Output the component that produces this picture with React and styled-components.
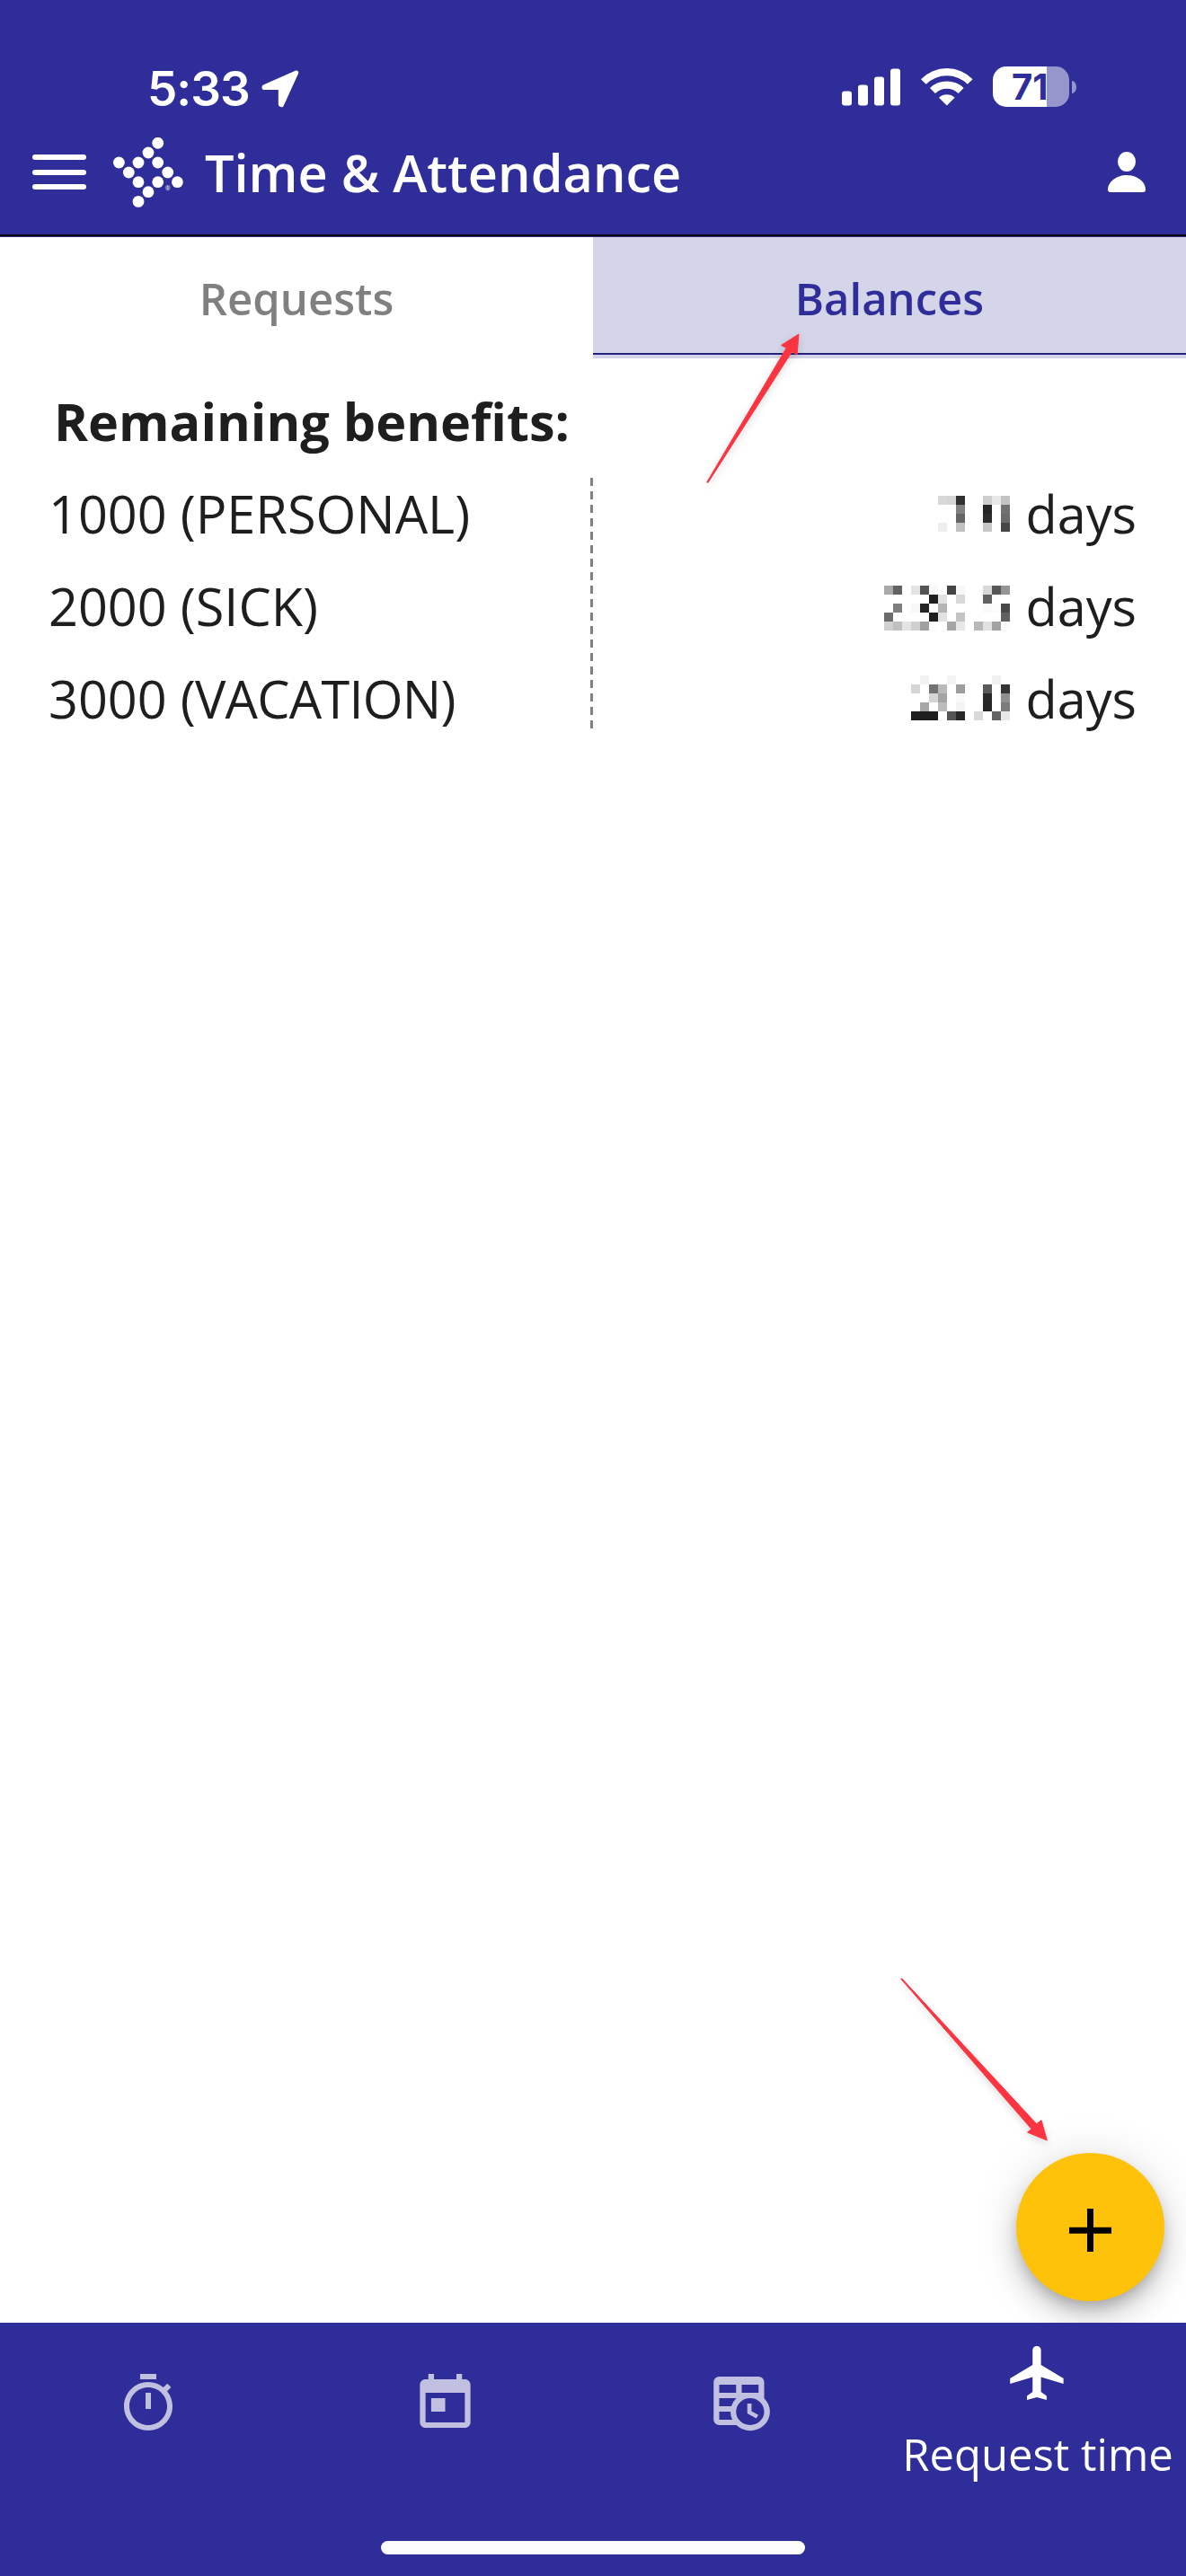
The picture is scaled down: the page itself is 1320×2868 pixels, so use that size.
import styled, { createGlobalStyle } from 'styled-components';

const benefits = [
    {
        code: '1000',
        name: '(PERSONAL)',
        mask: [
            [, , , , , , 'd8', 'd6', '30', , , 'ce', 'e7', 'c3'],
            [, , , , , , , , '80', , , '25', , '72'],
            [, , , , , , , , '64', , , '2c', , '6b'],
            [, , , , , , 'ee', , 'c0', , , 'c7', , '46'],
        ],
    },
    {
        code: '2000',
        name: '(SICK)',
        mask: [
            ['a9', '62', , 'e4', '54', 'f8', , '44', 'f7', , , 'd8', '58', '95'],
            [, , , , , '1e', 'e1', , 'd8', , , '62'],
            [, '7e', , 'f8', '26', 'fc', 'b4', , , , , 'f9', 'fc', '48'],
            ['6b', , , , , '1e', 'e1', , 'c4', , , , , '60'],
            ['d0', 'c0', 'e4', 'cf', 'a0', 'fc', , 'a5', 'e7', , 'b8', 'e2', 'a2', 'fb'],
        ],
    },
    {
        code: '3000',
        name: '(VACATION)',
        tight: true,
        mask: [
            [, , , , 'f2', , , 'f3', , , , , 'f1'],
            [, , , 'd6', , '72', 'ba', , '9d', , , '5a', , '35'],
            [, , , , , 'd5', 'a4', , 'fa', , , '28', , '8f'],
            [, , , , 'a7', , 'bc', , 'f4', , , '26', , '7b'],
            [, , , '1e', '1e', '1e', , '55', '28', , 'd9', , '64', 'e7'],
        ],
    },
];

const logoDots = [
    [49.7, 6.3], [39, 17], [28, 28], [49.7, 28], [6.4, 28], [17.3, 39],
    [60.7, 39], [28, 49.7], [49.7, 49.7], [71.4, 49.7], [39, 60.7], [28, 71.4],
];

const navItems = [
    {
        id: 'timer',
        width: 72,
        path: 'M15 1H9v2h6V1zm-4 13h2V8h-2v6zm8.03-6.61l1.42-1.42c-.43-.51-.9-.99-1.41-1.41l-1.42 1.42C16.07 4.74 14.12 4 12 4c-4.97 0-9 4.03-9 9s4.02 9 9 9 9-4.03 9-9c0-2.12-.74-4.07-1.97-5.61zM12 20c-3.87 0-7-3.13-7-7s3.13-7 7-7 7 3.13 7 7-3.13 7-7 7z',
    },
    {
        id: 'calendar',
        width: 75,
        path: 'M19 3h-1V1h-2v2H8V1H6v2H5c-1.11 0-2 .9-2 2v14c0 1.1.89 2 2 2h14c1.1 0 2-.9 2-2V5c0-1.1-.9-2-2-2zm0 16H5V8h14v11zM7 10h5v5H7z',
    },
    {
        id: 'timesheet',
        width: 75,
        path: 'M4 2h14a2 2 0 0 1 2 2v6.1A7 7 0 1 1 10.1 20H4a2 2 0 0 1-2-2V4a2 2 0 0 1 2-2zM4 5v3h6V5zM12 5v3h6V5zM4 10v3h4.29A7 7 0 0 1 10.1 10zM4 15v3h4.67A7 7 0 0 1 8 15zM15 10a5 5 0 1 0 0 10a5 5 0 1 0 0-10zM14 12V15.69L17.19 17.53L17.94 16.23L15.5 14.82V12z',
    },
    {
        id: 'request',
        width: 75,
        label: 'Request time',
        path: 'M21 16v-2l-8-5V3.5a1.5 1.5 0 0 0-3 0V9l-8 5v2l8-2.5V19l-2 1.5V22l3.5-1 3.5 1v-1.5L13 19v-5.5z',
    },
];

const Mask = ({ rows }) => (
    <MaskSvg width="140" height={rows.length * 10} shapeRendering="crispEdges">
        {rows.map((row, y) => row.map((c, x) => (
            <rect key={`${x}-${y}`} x={x * 10} y={y * 10} width="10" height="10" fill={`#${c}${c}${c}`} />
        )))}
    </MaskSvg>
)

const StatusBar = () => (
    <Status>
        <Clock>5:33</Clock>
        <svg width="42" height="42" viewBox="0 0 42 42" fill="#fff" stroke="#fff" strokeWidth="5" strokeLinejoin="round">
            <path d="M38.7 3L3 18.7V19.5H21.3V38.2L22.4 38.7Z" />
        </svg>
        <StatusRight>
            <svg width="66" height="42" fill="#fff">
                <rect x="0" y="25.5" width="11" height="16" rx="3" />
                <rect x="18" y="18.5" width="11" height="23" rx="3" />
                <rect x="36" y="9.5" width="11" height="32" rx="3" />
                <rect x="54" y="0.5" width="11" height="41" rx="3" />
            </svg>
            <svg width="58" height="43" fill="#fff">
                <path d="M0 13.2A40 40 0 0 1 57.6 13.2L51.9 18.8A33 33 0 0 0 5.7 18.8Z" />
                <path d="M10 23A27 27 0 0 1 47.6 23L41.6 29A18.5 18.5 0 0 0 16 29Z" />
                <path d="M20 33.8A13 13 0 0 1 37.6 33.8L28.8 42.6Z" />
            </svg>
            <Battery>
                <BatteryBody>71</BatteryBody>
                <BatteryTip />
            </Battery>
        </StatusRight>
    </Status>
)

const Arrow = ({ points }) => (
    <polygon points={points} fill="#fb3441" stroke="#fb3441" strokeWidth="1" strokeLinejoin="round" />
)

const App = () => {
    return (
        <>
            <GlobalStyle />
            <Screen>
                <Header>
                    <StatusBar />
                    <AppBar>
                        <Menu><i /><i /><i /></Menu>
                        <Logo viewBox="0 0 78 78">
                            {logoDots.map(([x, y]) => <circle key={`${x}-${y}`} cx={x} cy={y} r="6.4" />)}
                            <text x="57.7" y="59" fontSize="7">®</text>
                        </Logo>
                        <Title>Time &amp; Attendance</Title>
                        <svg width="42" height="45" fill="#fff">
                            <ellipse cx="21" cy="11" rx="10" ry="11" />
                            <path d="M0 42C0 34 9 26 21 26S42 34 42 42Q42 45 39 45H3Q0 45 0 42Z" />
                        </svg>
                    </AppBar>
                </Header>
                <Tabs>
                    <Tab>Requests</Tab>
                    <Tab $active>Balances</Tab>
                </Tabs>
                <Main>
                    <Heading>Remaining benefits:</Heading>
                    <Benefits>
                        <Column>
                            {benefits.map(b => (
                                <Row key={b.code}>
                                    <span>{b.code}</span>
                                    <Name $tight={b.tight}>{b.name}</Name>
                                </Row>
                            ))}
                        </Column>
                        <Divider />
                        <Column>
                            {benefits.map(b => (
                                <Row key={b.code} $end>
                                    <Mask rows={b.mask} />
                                    days
                                </Row>
                            ))}
                        </Column>
                    </Benefits>
                    <AddButton>
                        <svg width="47" height="48">
                            <path d="M20 0h7v20.7h20v7H27V48h-7V27.7H0v-7h20z" />
                        </svg>
                    </AddButton>
                </Main>
                <Nav>
                    {navItems.map(item => (
                        <NavItem key={item.id} $active={!!item.label}>
                            <svg width={item.width} height="72" viewBox="0 0 24 24" preserveAspectRatio="none">
                                <path d={item.path} fill="currentColor" fillRule="evenodd" />
                            </svg>
                            {item.label && <NavLabel>{item.label}</NavLabel>}
                        </NavItem>
                    ))}
                </Nav>
                <HomeBar><i /></HomeBar>
                <Marks viewBox="0 0 1320 2868">
                    <Arrow points="786.8,536.8 875.3,387.3 869.5,384.4 889,372 887,395 881.5,391.5 788,537.4" />
                    <Arrow points="1002.8,2203.3 1148,2370.3 1143.6,2374 1165.3,2383 1159,2360.6 1153.7,2364.7 1003.8,2202.8" />
                </Marks>
            </Screen>
        </>
    )
}

const GlobalStyle = createGlobalStyle`
    body {
        margin: 0;
        background-color: #fff;
        font-family: "Open Sans", "Noto Sans", sans-serif;
    }
    svg {
        display: block;
        flex-shrink: 0;
    }
`;

const Screen = styled.div`
    position: relative;
    display: flex;
    flex-direction: column;
    width: 1320px;
    height: 2868px;
    overflow: hidden;
    color: #1e1e1e;
`;
const Header = styled.header`
    box-sizing: border-box;
    height: 264px;
    background-color: #2f2d99;
    border-bottom: 1px solid #2f2d80;
    box-shadow: inset 0 -2px 0 #0a0512;
    color: #fff;
`;
const Status = styled.div`
    display: flex;
    align-items: center;
    box-sizing: border-box;
    height: 142px;
    padding: 55px 122px 0 164px;
`;
const Clock = styled.span`
    width: 127px;
    font: 600 53px/60px Inter, sans-serif;
    letter-spacing: -1px;
`;
const StatusRight = styled.div`
    display: flex;
    align-items: center;
    gap: 22px;
    margin-left: auto;
    margin-bottom: 4px;
`;
const Battery = styled.div`
    display: flex;
    align-items: center;
    gap: 3px;
`;
const BatteryBody = styled.div`
    box-sizing: border-box;
    width: 85px;
    height: 45px;
    padding-left: 21px;
    border-radius: 15px;
    background: linear-gradient(to right, #fff 60px, #9796cc 60px);
    color: #2f2d99;
    font: 700 40px/45px Inter, sans-serif;
`;
const BatteryTip = styled.div`
    width: 5px;
    height: 14px;
    border-radius: 0 5px 5px 0 / 0 7px 7px 0;
    background-color: #9796cc;
`;
const AppBar = styled.div`
    display: flex;
    align-items: center;
    height: 99px;
    padding: 0 45px 0 36px;
`;
const Menu = styled.div`
    display: flex;
    flex-direction: column;
    gap: 10.5px;
    width: 60px;
    margin-right: 30px;
    i {
        height: 6px;
        border-radius: 3px;
        background-color: #fff;
    }
`;
const Logo = styled.svg`
    width: 78px;
    height: 78px;
    fill: #fff;
`;
const Title = styled.h1`
    flex: 1;
    margin: 0 0 0 24px;
    font-size: 57.6px;
    font-weight: 600;
    line-height: 78px;
`;
const Tabs = styled.div`
    display: grid;
    grid-template-columns: 1fr 1fr;
    height: 135px;
`;
const Tab = styled.div`
    box-sizing: border-box;
    padding-top: 34px;
    text-align: center;
    font-size: 49px;
    font-weight: 600;
    line-height: 68px;
    color: ${props => props.$active ? "#2f2d99" : "#808080"};
    background: ${props => props.$active
        ? "linear-gradient(#d5d5e9 129px, #1c1a66 129px, #1c1a66 130px, #2f2d99 130px, #2f2d99 131px, #d5d5e9 131px)"
        : "#fff"};
`;
const Main = styled.main`
    position: relative;
    flex: 1;
    overflow: hidden;
`;
const Heading = styled.h2`
    margin: 30px 0 0 60px;
    font-size: 57.6px;
    font-weight: 700;
    line-height: 80px;
`;
const Benefits = styled.div`
    display: grid;
    grid-template-columns: 603px 3px 605px;
    margin: 11px 55px 0 54px;
`;
const Column = styled.div`
    display: flex;
    flex-direction: column;
`;
const Row = styled.div`
    display: flex;
    justify-content: ${props => props.$end ? "flex-end" : "flex-start"};
    gap: ${props => props.$end ? "17px" : "15px"};
    height: 103px;
    font-size: 57.6px;
    line-height: 103px;
`;
const Name = styled.span`
    letter-spacing: ${props => props.$tight ? "-0.75px" : "normal"};
`;
const MaskSvg = styled.svg`
    margin-top: 32px;
    /* each block sits on a 100px step while the rows step by 103px */
    ${Row}:nth-child(2) & { margin-top: 29px; }
    ${Row}:nth-child(3) & { margin-top: 26px; }
`;
const Divider = styled.div`
    height: 279px;
    margin-top: 12px;
    background: repeating-linear-gradient(#808080 0 9px, transparent 9px 15px);
`;
const AddButton = styled.button`
    position: absolute;
    right: 24px;
    bottom: 24px;
    display: flex;
    align-items: center;
    justify-content: center;
    width: 165px;
    height: 165px;
    padding: 7px 0 0;
    border: 0;
    border-radius: 50%;
    background-color: #fec20a;
    box-shadow: 0 9px 15px -3px rgba(0,0,0,.2), 0 18px 30px rgba(0,0,0,.14), 0 3px 54px rgba(0,0,0,.12);
`;
const Nav = styled.nav`
    display: grid;
    grid-template-columns: repeat(4, 1fr);
    height: 243px;
    background-color: #2f2d99;
`;
const NavItem = styled.div`
    display: flex;
    flex-direction: column;
    align-items: center;
    padding-top: ${props => props.$active ? "20px" : "54px"};
    color: ${props => props.$active ? "#fff" : "#c1c0e0"};
`;
const NavLabel = styled.span`
    margin-top: 20px;
    font-size: 49px;
    line-height: 68px;
    white-space: nowrap;
`;
const HomeBar = styled.div`
    display: flex;
    justify-content: center;
    height: 39px;
    background-color: #2f2d99;
    i {
        width: 472px;
        height: 15px;
        border-radius: 8px;
        background-color: #fcfcfc;
    }
`;
const Marks = styled.svg`
    position: absolute;
    inset: 0;
    width: 1320px;
    height: 2868px;
    pointer-events: none;
    filter: drop-shadow(0 3px 4px rgba(0,0,0,.15));
`;

export default App;
